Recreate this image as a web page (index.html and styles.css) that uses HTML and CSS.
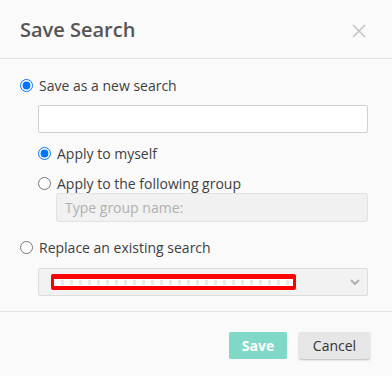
FILE: index.html
```html
<!DOCTYPE html>
<html lang="en">
  <head>
    <meta charset="UTF-8" />
    <title>Save Search</title>
    <link rel="stylesheet" href="styles.css">
  </head>
  <body>
    <div class="modal">
      <div class="modal-header">
        <h2 class="title">Save Search</h2>
        <svg class="close" width="14" height="14" viewBox="0 0 14 14">
          <path d="M1 1 L13 13 M13 1 L1 13" stroke="#c4c4c4" stroke-width="1.6" fill="none" />
        </svg>
      </div>

      <div class="modal-body">
        <label class="radio-row">
          <input type="radio" name="mode" checked />
          <span>Save as a new search</span>
        </label>
        <div class="indent">
          <input type="text" class="text-input" />

          <label class="radio-row sub">
            <input type="radio" name="apply" checked />
            <span>Apply to myself</span>
          </label>
          <label class="radio-row sub">
            <input type="radio" name="apply" />
            <span>Apply to the following group</span>
          </label>
          <div class="indent">
            <input type="text" class="text-input disabled" placeholder="Type group name:" disabled />
          </div>
        </div>

        <label class="radio-row replace">
          <input type="radio" name="mode" />
          <span>Replace an existing search</span>
        </label>
        <div class="indent">
          <div class="fake-select">
            <span class="redacted"><span class="redacted-inner"></span></span>
            <svg class="chevron" width="10" height="7" viewBox="0 0 10 7">
              <path d="M1 1 L5 5 L9 1" stroke="#b0b0b0" stroke-width="2" fill="none" />
            </svg>
          </div>
        </div>
      </div>

      <div class="modal-footer">
        <button class="btn save">Save</button>
        <button class="btn cancel">Cancel</button>
      </div>
    </div>
  </body>
</html>
```

FILE: styles.css
```css
* {
  padding: 0px;
  margin: 0px;
  box-sizing: border-box;
  font-family: "Open Sans", sans-serif;
}

body {
  background-color: #fafafa;
  color: #404040;
}

.modal {
  width: 392px;
  height: 376px;
}

.modal-header {
  height: 59px;
  padding: 16px 20px 0 20px;
  border-bottom: 1px solid #e2e2e2;
  display: flex;
  justify-content: space-between;
}

.title {
  font-size: 20px;
  line-height: 28px;
  font-weight: 600;
  color: #555;
}

.close {
  margin-top: 8px;
  margin-right: 6px;
}

.modal-body {
  padding: 16px 24px 15px 20px;
  border-bottom: 1px solid #e2e2e2;
}

.radio-row {
  display: flex;
  align-items: center;
  gap: 6px;
  height: 20px;
  font-size: 14px;
  color: #404040;
}

.radio-row input {
  margin: 0;
  width: 13px;
  height: 13px;
}

.radio-row.sub {
  margin-top: 10px;
}

.radio-row.replace {
  margin-top: 15px;
}

.indent {
  padding-left: 18px;
}

.text-input {
  display: block;
  width: 100%;
  height: 28px;
  margin-top: 10px;
  border: 1px solid #d0d0d0;
  border-radius: 2px;
  background-color: #fff;
  padding: 0 8px;
  font-size: 14px;
  outline: none;
}

.text-input.disabled {
  margin-top: 0;
  height: 29px;
  background-color: #f1f1f1;
  border-color: #e2e2e2;
  border-radius: 3px;
}

.text-input.disabled::placeholder {
  color: #b0b0b0;
}

.fake-select {
  margin-top: 11px;
  height: 28px;
  border: 1px solid #dcdcdc;
  border-radius: 2px;
  background-color: #f2f2f2;
  display: flex;
  align-items: center;
  justify-content: space-between;
  padding: 0 7px 0 12px;
}

.redacted {
  width: 245px;
  height: 16px;
  background-color: #ff0000;
  border-radius: 2px;
  padding: 4px 3px;
  display: flex;
  align-items: center;
}

.redacted-inner {
  display: block;
  width: 100%;
  height: 7px;
  border: 1px solid #fff;
  background: repeating-linear-gradient(90deg, #fff 0 6px, #e8e8e8 6px 9px);
}

.modal-footer {
  display: flex;
  justify-content: flex-end;
  gap: 12px;
  padding: 20px 22px 0 0;
}

.btn {
  height: 27px;
  border: none;
  border-radius: 2px;
  font-size: 14px;
  cursor: pointer;
}

.save {
  width: 58px;
  background-color: #7fd9c6;
  color: #fff;
  font-weight: 700;
}

.cancel {
  width: 71px;
  background-color: #e6e6e6;
  color: #333;
  box-shadow: 0 1px 2px #b8b8b8;
}
```
